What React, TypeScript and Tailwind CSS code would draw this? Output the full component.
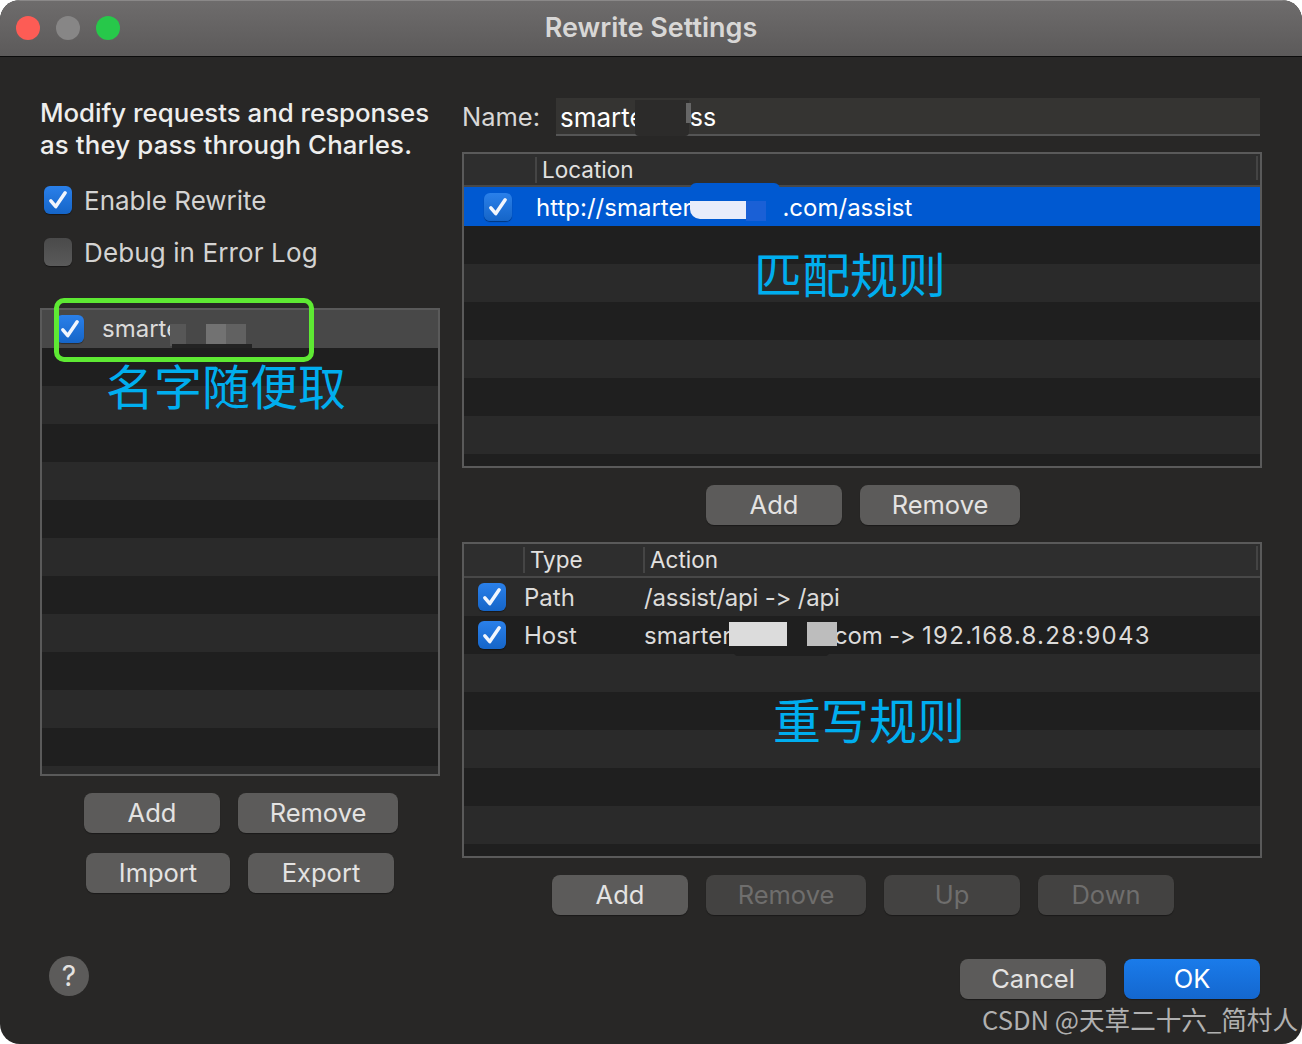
const CJK = "font-['Noto_Sans_CJK_SC',sans-serif]";

const Check = ({ checked = true, className = "" }: { checked?: boolean; className?: string }) => (
  <div
    className={
      "flex h-[28px] w-[28px] shrink-0 items-center justify-center rounded-[6px] shadow-[0_1px_1px_rgba(0,0,0,0.4)] " +
      (checked ? "bg-gradient-to-b from-[#2a80ea] to-[#1565c8] " : "bg-gradient-to-b from-[#4a4a4a] to-[#5a5a5a] ") +
      className
    }
  >
    {checked && (
      <svg width="22" height="22" viewBox="0 0 20 20" fill="none">
        <path d="M3.5 10.8 L8 16 L16.5 3.5" stroke="#f2f6fd" strokeWidth="3.2" strokeLinecap="round" strokeLinejoin="round" />
      </svg>
    )}
  </div>
);

type BtnProps = { label: string; w: string; kind?: "normal" | "off" | "blue" };

const Btn = ({ label, w, kind = "normal" }: BtnProps) => {
  const tone =
    kind === "blue"
      ? "bg-gradient-to-b from-[#1a7bea] to-[#1467cf] text-white"
      : kind === "off"
        ? "bg-[#434241] text-[#6f6e6d]"
        : "bg-[#5c5b5a] text-[#e4e3e2]";
  return (
    <div className={"flex h-[40px] items-center justify-center rounded-[8px] text-[25.5px] shadow-[0_1px_1px_rgba(0,0,0,0.35)] " + w + " " + tone}>
      {label}
    </div>
  );
};

const Stripes = ({ count, first }: { count: number; first: "light" | "dark" }) => (
  <>
    {Array.from({ length: count }).map((_, i) => {
      const light = first === "light" ? i % 2 === 0 : i % 2 === 1;
      return <div key={i} className={"h-[38px] shrink-0 " + (light ? "bg-[#2a2a2a]" : "bg-[#1f1f1f]")} />;
    })}
  </>
);

const Header = ({ h, children }: { h: string; children: React.ReactNode }) => (
  <div className={"relative flex shrink-0 items-start border-b-2 border-[#484848] bg-[#2e2e2e] pt-[3px] text-[22.5px] text-[#e2e1e0] " + h}>
    {children}
    <div className="absolute right-[2px] top-[2px] h-[24px] w-[2px] bg-[#444]" />
  </div>
);

const ColHead = ({ label, w }: { label: string; w: string }) => (
  <div className={"flex h-[26px] items-center border-l-2 border-[#454545] pl-[5px] " + w}>{label}</div>
);

export default function App() {
  return (
    <div className="h-[1044px] w-[1302px] bg-white">
      <div className="relative h-full w-full overflow-hidden rounded-[20px] bg-[#282726] font-['Inter',sans-serif] [font-feature-settings:'calt'_0]">
        {/* title bar */}
        <div className="relative flex h-[57px] items-center justify-center border-b border-t border-b-[#0c0c0c] border-t-[#8a8888] bg-gradient-to-b from-[#6e6c6c] to-[#5c5a5a]">
          <div className="absolute left-[16px] top-[15px] flex gap-[16px]">
            <div className="h-[24px] w-[24px] rounded-full bg-[#fd5c55]" />
            <div className="h-[24px] w-[24px] rounded-full bg-[#878686]" />
            <div className="h-[24px] w-[24px] rounded-full bg-[#27c84a]" />
          </div>
          <div className="text-[27px] font-semibold text-[#d8d7d6]">Rewrite Settings</div>
        </div>

        <div className="flex pl-[40px]">
          {/* left column */}
          <div className="flex w-[400px] shrink-0 flex-col">
            <p className="mt-[40px] text-[25.8px] font-medium leading-[32px] text-[#eeeeed]">
              Modify requests and responses
              <br />
              <span className="tracking-[0.15px]">as they pass through Charles.</span>
            </p>
            <div className="mt-[25px] flex h-[28px] items-center gap-[12px] pl-[4px] text-[26px] text-[#d4d3d2]">
              <Check />
              Enable Rewrite
            </div>
            <div className="mt-[24px] flex h-[28px] items-center gap-[12px] pl-[4px] text-[26px] tracking-[0.12px] text-[#d4d3d2]">
              <Check checked={false} />
              Debug in Error Log
            </div>

            <div className="mt-[42px] flex h-[468px] flex-col overflow-hidden border-2 border-[#5a5a5a] bg-[#2a2a2a]">
              <div className="relative flex h-[38px] shrink-0 items-center bg-[#484848] text-[24px] text-[#dcdbda]">
                <Check className="ml-[14px]" />
                <span className="ml-[18px]">smarte</span>
                <div className="absolute left-[128px] top-[14px] flex h-[22px] w-[80px]">
                  <div className="w-[16px] bg-[#575757]" />
                  <div className="w-[20px] bg-[#484848]" />
                  <div className="w-[20px] bg-[#727272]" />
                  <div className="w-[20px] bg-[#616161]" />
                </div>
                <div className="absolute bottom-0 left-[130px] h-[4px] w-[80px] bg-[#232323]" />
              </div>
              <Stripes count={12} first="dark" />
            </div>

            <div className="mt-[17px] flex justify-center gap-[18px] pl-[2px]">
              <Btn label="Add" w="w-[136px]" />
              <Btn label="Remove" w="w-[160px]" />
            </div>
            <div className="mt-[20px] flex justify-center gap-[18px]">
              <Btn label="Import" w="w-[144px]" />
              <Btn label="Export" w="w-[146px]" />
            </div>
            <div className="ml-[9px] mt-[63px] flex h-[40px] w-[40px] items-center justify-center rounded-full bg-[#5c5b5a] text-[28px] text-[#e4e3e2]">
              ?
            </div>
          </div>

          {/* right column */}
          <div className="ml-[22px] flex w-[800px] shrink-0 flex-col">
            <div className="mt-[41px] flex h-[38px] items-center">
              <span className="w-[94px] text-[25.5px] text-[#d8d7d6]">Name:</span>
              <div className="relative flex h-[38px] w-[704px] items-center border-b-2 border-[#555] bg-[#353432] pl-[4px] pt-[3px] text-[26px] text-white">
                <span>smarte</span>
                <span className="w-[45px]" />
                <span className="text-[25px]">ss</span>
                <div className="absolute left-[79px] top-[2px] h-[36px] w-[54px] rounded-b-[4px] bg-[#2c2b2a]" />
                <div className="absolute left-[130px] top-[5px] h-[20px] w-[5px] bg-[#666]" />
              </div>
            </div>

            {/* location table */}
            <div className="mt-[16px] flex h-[316px] flex-col overflow-hidden border-2 border-[#5a5a5a] bg-[#1f1f1f]">
              <Header h="h-[33px]">
                <div className="w-[71px]" />
                <ColHead label="Location" w="w-[300px]" />
              </Header>
              <div className="relative flex h-[39px] shrink-0 items-center bg-[#0059d1] text-[24px] text-white">
                <Check className="ml-[20px]" />
                <span className="ml-[24px] mt-[2px]">http://smarter</span>
                <span className="w-[91px]" />
                <span className="mt-[2px]">.com/assist</span>
                <div className="absolute left-[226px] top-[14px] h-[18px] w-[56px] rounded-bl-[10px] bg-[#e8ecfa]" />
                <div className="absolute left-[282px] top-[14px] h-[20px] w-[20px] bg-[#1a60d6]" />
                <div className="absolute left-[226px] top-[-4px] h-[6px] w-[90px] rounded-t-full bg-[#0059d1]" />
              </div>
              <Stripes count={7} first="dark" />
            </div>

            <div className="mt-[17px] flex justify-center gap-[18px] pl-[2px]">
              <Btn label="Add" w="w-[136px]" />
              <Btn label="Remove" w="w-[160px]" />
            </div>

            {/* rewrite table */}
            <div className="mt-[17px] flex h-[316px] flex-col overflow-hidden border-2 border-[#5a5a5a] bg-[#1f1f1f]">
              <Header h="h-[34px]">
                <div className="w-[59px]" />
                <ColHead label="Type" w="w-[120px]" />
                <ColHead label="Action" w="w-[300px]" />
              </Header>
              <div className="flex h-[38px] shrink-0 items-center bg-[#2a2a2a] text-[24px] text-[#dcdbda]">
                <Check className="ml-[14px]" />
                <span className="ml-[18px] mt-[2px] w-[120px]">Path</span>
                <span className="mt-[2px] tracking-[-0.2px]">/assist/api -&gt; /api</span>
              </div>
              <div className="relative flex h-[38px] shrink-0 items-center bg-[#1f1f1f] text-[24px] text-[#dcdbda]">
                <Check className="ml-[14px]" />
                <span className="ml-[18px] mt-[2px] w-[120px]">Host</span>
                <span className="mt-[2px]">smarter</span>
                <span className="w-[96px]" />
                <span className="mt-[2px] tracking-[-0.2px]">.com -&gt;&nbsp;</span>
                <span className="mt-[2px] tracking-[1.25px]">192.168.8.28:9043</span>
                <div className="absolute left-[265px] top-[6px] flex h-[24px] w-[108px]">
                  <div className="w-[58px] bg-[#dcdcdc]" />
                  <div className="w-[20px] bg-[#1f1f1f]" />
                  <div className="w-[30px] bg-[#bdbdbd]" />
                </div>
                <div className="absolute left-[270px] top-[36px] h-[4px] w-[95px] rounded-b-full bg-[#1f1f1f]" />
              </div>
              <Stripes count={6} first="light" />
            </div>

            <div className="mt-[17px] flex justify-center gap-[18px] pl-[2px]">
              <Btn label="Add" w="w-[136px]" />
              <Btn label="Remove" w="w-[160px]" kind="off" />
              <Btn label="Up" w="w-[136px]" kind="off" />
              <Btn label="Down" w="w-[136px]" kind="off" />
            </div>

            <div className="mt-[44px] flex justify-end gap-[18px] pr-[2px]">
              <Btn label="Cancel" w="w-[146px]" />
              <Btn label="OK" w="w-[136px]" kind="blue" />
            </div>
          </div>
        </div>

        {/* annotations pasted over the shot */}
        <div className="absolute left-[54px] top-[298px] h-[64px] w-[260px] rounded-[10px] border-[5px] border-[#5ee933]" />
        <div className={"absolute left-[106px] top-[349px] text-[48px] font-normal leading-[70px] text-[#00aeef] " + CJK}>名字随便取</div>
        <div className={"absolute left-[754px] top-[237px] text-[48px] font-normal leading-[70px] text-[#00aeef] " + CJK}>匹配规则</div>
        <div className={"absolute left-[773px] top-[683px] text-[48px] font-normal leading-[70px] text-[#00aeef] " + CJK}>重写规则</div>
        <div className={"absolute left-[982px] top-[1001px] whitespace-nowrap text-[25.6px] leading-[36px] text-[#b0b0b0] " + CJK}>CSDN @天草二十六_简村人</div>
      </div>
    </div>
  );
}
